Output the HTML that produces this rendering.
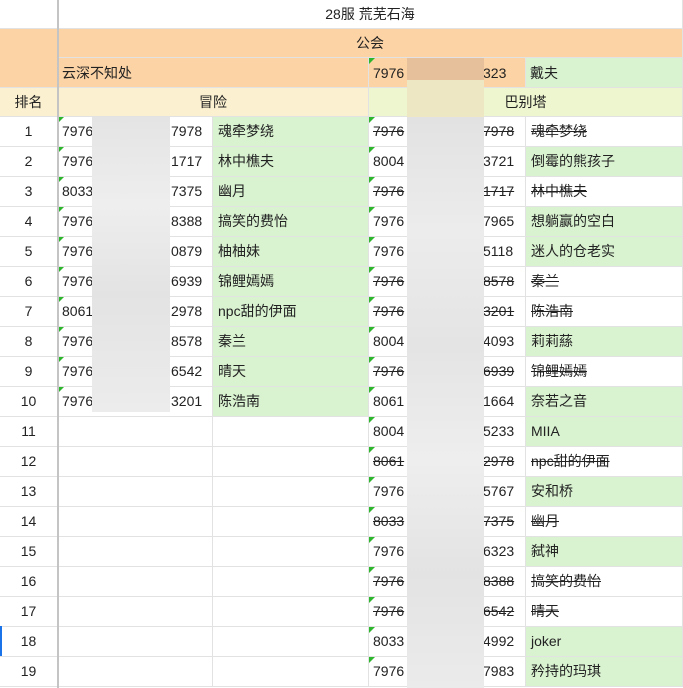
<!DOCTYPE html>
<html><head><meta charset="utf-8"><style>
body{margin:0;width:683px;height:688px;overflow:hidden;background:#fff;font-family:"Liberation Sans","Noto Sans CJK SC",sans-serif;font-size:14px;color:#222;position:relative}
.c{position:absolute;box-sizing:border-box;border-right:1px solid #e2e2e2;border-bottom:1px solid #e2e2e2;line-height:29px;white-space:nowrap;overflow:hidden;padding-left:4px}
.ctr{text-align:center;padding-left:0}
.g{background:#d9f2d0}
.o{background:#fcd3a5}
.y{background:#fbf0cf}
.yg{background:#eef6cf}
.s{text-decoration:line-through}
.t::before{content:"";position:absolute;left:0;top:0;border-top:6px solid #2db52d;border-right:6px solid transparent}
.b{position:absolute;background:#e6e6e6}
</style></head><body>
<div class="c ctr" style="left:0;top:0;width:58px;height:29px"></div>
<div class="c ctr" style="left:58px;top:0;width:625px;height:29px">28服 荒芜石海</div>
<div class="c o" style="left:0;top:29px;width:58px;height:59px"></div>
<div class="c o ctr" style="left:58px;top:29px;width:625px;height:29px">公会</div>
<div class="c o" style="left:58px;top:58px;width:311px;height:30px;line-height:30px">云深不知处</div>
<div class="c o t" style="left:369px;top:58px;width:157px;height:30px;line-height:30px">7976<span style="position:absolute;left:114px">323</span></div>
<div class="c g" style="left:526px;top:58px;width:157px;height:30px;line-height:30px">戴夫</div>
<div class="c y ctr" style="left:0;top:88px;width:58px;height:29px">排名</div>
<div class="c y ctr" style="left:58px;top:88px;width:311px;height:29px">冒险</div>
<div class="c yg ctr" style="left:369px;top:88px;width:314px;height:29px">巴别塔</div>
<div id="rows"></div>
<div style="position:absolute;left:57px;top:0;width:2px;height:688px;background:#c4c4c4"></div>
<div style="position:absolute;left:0;top:626px;width:2px;height:30px;background:#1a73e8"></div>
<div class="b" style="left:92px;top:117px;width:78px;height:295px;background:linear-gradient(#e4e4e4,#eeeeee 30%,#e3e3e3 60%,#ececec)"></div>
<div class="b" style="left:407px;top:58px;width:77px;height:22px;background:#e6c09b"></div>
<div class="b" style="left:407px;top:80px;width:77px;height:37px;background:#eee7c3"></div>
<div class="b" style="left:407px;top:117px;width:77px;height:571px;background:linear-gradient(#e2e2e2,#ececec 20%,#e4e4e4 40%,#eeeeee 60%,#e3e3e3 80%,#ebebeb)"></div>
<script>
var A=[["7976","7978","魂牵梦绕"],["7976","1717","林中樵夫"],["8033","7375","幽月"],["7976","8388","搞笑的费怡"],["7976","0879","柚柚妹"],["7976","6939","锦鲤嫣嫣"],["8061","2978","npc甜的伊面"],["7976","8578","秦兰"],["7976","6542","晴天"],["7976","3201","陈浩南"]];
var C=[["7976","7978","魂牵梦绕",1],["8004","3721","倒霉的熊孩子",0],["7976","1717","林中樵夫",1],["7976","7965","想躺赢的空白",0],["7976","5118","迷人的仓老实",0],["7976","8578","秦兰",1],["7976","3201","陈浩南",1],["8004","4093","莉莉蕬",0],["7976","6939","锦鲤嫣嫣",1],["8061","1664","奈若之音",0],["8004","5233","MIIA",0],["8061","2978","npc甜的伊面",1],["7976","5767","安和桥",0],["8033","7375","幽月",1],["7976","6323","弑神",0],["7976","8388","搞笑的费怡",1],["7976","6542","晴天",1],["8033","4992","joker",0],["7976","7983","矜持的玛琪",0]];
var h="";
for(var i=0;i<19;i++){var y=116+30*i+1;var st="top:"+y+"px;height:30px;";
h+='<div class="c ctr" style="left:0;'+st+'width:58px">'+(i+1)+'</div>';
if(i<10){var a=A[i];h+='<div class="c t" style="left:58px;'+st+'width:155px">'+a[0]+'<span style="position:absolute;left:113px">'+a[1]+'</span></div><div class="c g" style="left:213px;'+st+'width:156px;padding-left:5px">'+a[2]+'</div>';}
else{h+='<div class="c" style="left:58px;'+st+'width:155px"></div><div class="c" style="left:213px;'+st+'width:156px"></div>';}
var c=C[i];var s=c[3]?' s':'';
h+='<div class="c t'+s+'" style="left:369px;'+st+'width:157px">'+c[0]+'<span class="'+s+'" style="position:absolute;left:114px">'+c[1]+'</span></div><div class="c'+s+(c[3]?'':' g')+'" style="left:526px;'+st+'width:157px;padding-left:5px">'+c[2]+'</div>';}
document.getElementById("rows").innerHTML=h;
</script>
</body></html>
